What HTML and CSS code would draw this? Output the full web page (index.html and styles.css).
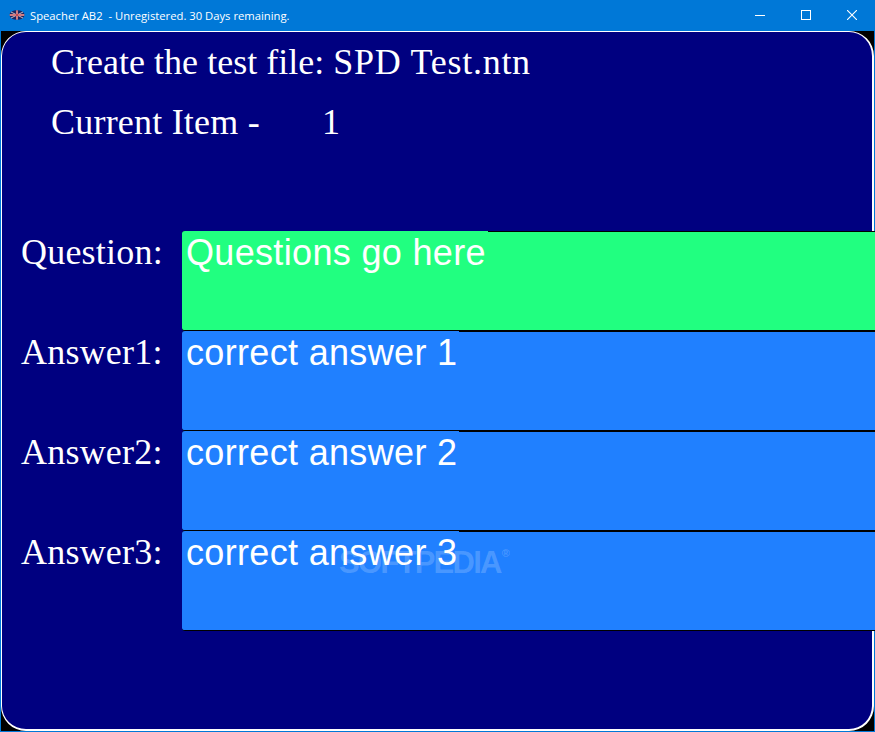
FILE: index.html
```html
<!DOCTYPE html>
<html lang="en">
<head>
<meta charset="utf-8">
<title>Speacher AB2</title>
<link rel="stylesheet" href="styles.css">
</head>
<body>
<div class="window">
  <header class="titlebar">
    <svg class="app-icon" width="16" height="16" viewBox="0 0 16 16">
      <ellipse cx="8" cy="8" rx="7.5" ry="4.8" fill="#1c2560"/>
      <path d="M2 5 14 11M14 5 2 11" stroke="#c9b6c0" stroke-width="1"/>
      <path d="M8 3.4V12.6M.8 8H15.2" stroke="#e8dfe2" stroke-width="2"/>
      <path d="M8 3.4V12.6M.8 8H15.2" stroke="#b8141f" stroke-width="1"/>
    </svg>
    <span class="title">Speacher AB2&nbsp; - Unregistered. 30 Days remaining.</span>
    <div class="controls">
      <span class="ctl"><svg width="10" height="10" viewBox="0 0 10 10"><path d="M0 5.5H10" stroke="#fff"/></svg></span>
      <span class="ctl"><svg width="10" height="10" viewBox="0 0 10 10"><rect x=".5" y=".5" width="9" height="9" fill="none" stroke="#fff"/></svg></span>
      <span class="ctl"><svg width="10" height="10" viewBox="0 0 10 10"><path d="M0 0 10 10M10 0 0 10" stroke="#fff" stroke-width="1.1"/></svg></span>
    </div>
  </header>
  <main class="client">
    <div class="panel">
      <div class="heading">Create the test file: <span class="file-name">SPD Test.ntn</span></div>
      <div class="heading item"><span class="item-label">Current Item -</span><span>1</span></div>
      <section class="fields">
        <div class="row"><span class="label">Question:</span><div class="field question"><span class="value">Questions go here</span></div></div>
        <div class="row"><span class="label">Answer1:</span><div class="field answer"><span class="value">correct answer 1</span></div></div>
        <div class="row"><span class="label">Answer2:</span><div class="field answer"><span class="value">correct answer 2</span></div></div>
        <div class="row"><span class="label">Answer3:</span><div class="field answer"><span class="value">correct answer 3</span></div></div>
      </section>
      <div class="watermark">SOFTPEDIA<sup class="reg">®</sup></div>
    </div>
  </main>
</div>
</body>
</html>
```
FILE: styles.css
```css
* { box-sizing: border-box; }
html, body { margin: 0; padding: 0; }
body { width: 875px; height: 732px; overflow: hidden; background: #0078d7; }
.window { width: 875px; height: 732px; display: flex; flex-direction: column; padding: 0 1px 1px; background: #0078d7; overflow: hidden; }
.titlebar { height: 31px; flex: none; display: flex; align-items: center; padding-left: 8px; padding-bottom: 1px; color: #fff; font: 11.25px "Open Sans", "Noto Sans", sans-serif; }
.app-icon { flex: none; margin-right: 5px; }
.title { white-space: nowrap; }
.controls { margin-left: auto; display: flex; margin-right: -1px; }
.ctl { width: 46px; height: 30px; display: flex; align-items: center; justify-content: center; }
.client { flex: 1; background: #000; min-height: 0; }
.panel { position: relative; height: 100%; background: #000080; border: solid #fff; border-width: 1px 2px 2px 1px; border-radius: 25px; }
.heading { font: 36px/60px "Liberation Serif", serif; letter-spacing: .02px; color: #fff; padding-left: 49px; white-space: nowrap; }
.file-name { letter-spacing: .72px; }
.item { display: flex; letter-spacing: .21px; }
.item-label { width: 271px; }
.fields { margin-top: 79px; display: flex; flex-direction: column; }
.row { height: 100px; display: flex; margin-right: -3px; }
.label { width: 180px; flex: none; padding-left: 19px; font: 36px/42px "Liberation Serif", serif; letter-spacing: .21px; color: #fff; }
.field { flex: 1; height: 100px; border-radius: 3px 0 0 3px; border-top: 1px solid #000; border-bottom: 1px solid #000; font: 36px/42px "Liberation Sans", sans-serif; letter-spacing: .33px; color: #fff; }
.value { display: block; width: fit-content; margin-top: -1px; padding: 1px 2px 0 4px; background: inherit; border-radius: 3px 0 0 0; }
.question { background: #21ff80; }
.answer { background: #2080ff; }
.watermark { position: absolute; left: 337px; top: 515px; font: bold 31px/32px "Liberation Sans", sans-serif; letter-spacing: -1.75px; color: rgba(255,255,255,.2); white-space: nowrap; }
.reg { font-size: 11px; vertical-align: top; line-height: 12px; margin-left: 1px; }
```
